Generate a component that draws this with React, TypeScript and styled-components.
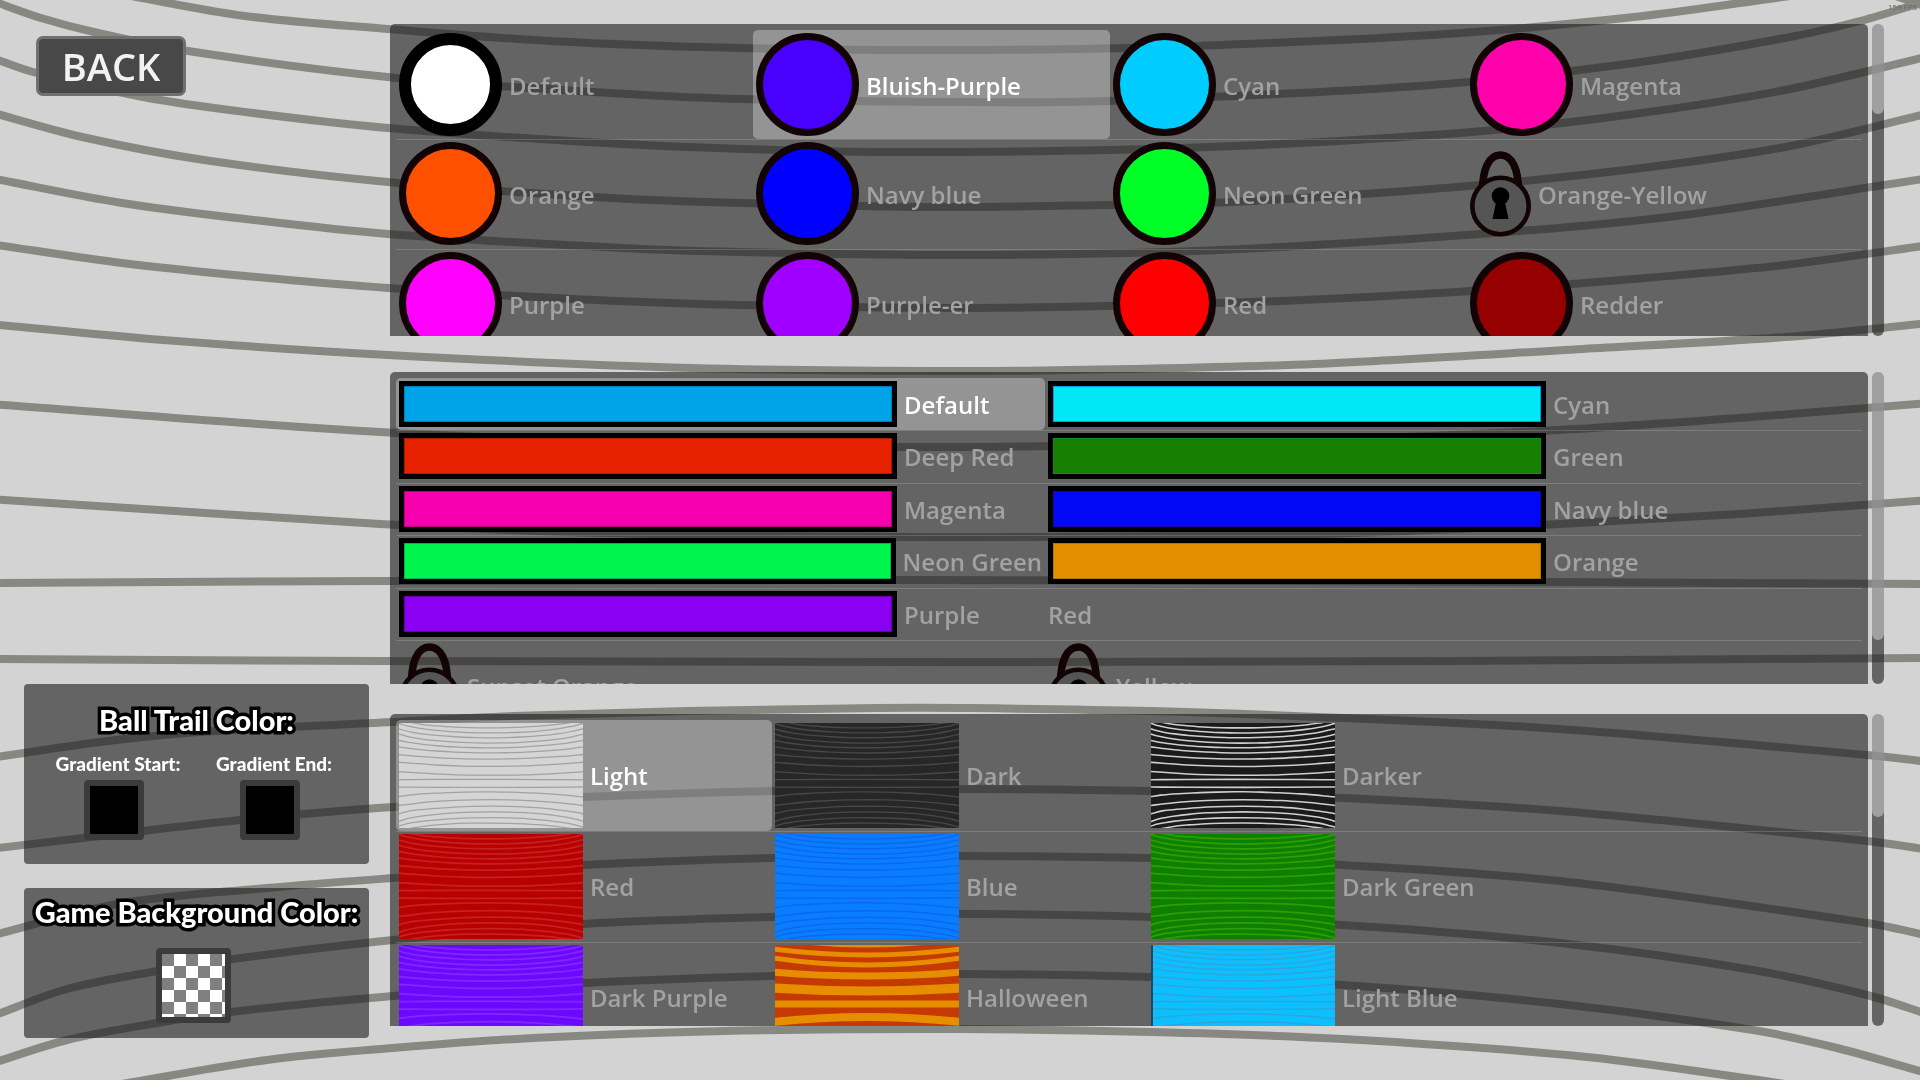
import React from "react";
import styled, { createGlobalStyle } from "styled-components";

const GlobalStyle = createGlobalStyle`
  * { box-sizing: border-box; }
  body {
    margin: 0;
    background: #d3d3d3;
    font-family: "Open Sans", "Noto Sans", sans-serif;
    overflow: hidden;
  }
`;

/* ---------- striped backdrop, also used inside the theme thumbnails ---------- */

type Point = [number, number];

const CURVES: Point[][] = [
  [[120, -6], [245, 16], [388, 29], [550, 41], [739, 48], [937, 50], [1126, 48], [1432, 35], [1634, 17], [1790, -4]],
  [[-10, 0], [41, 18], [94, 32], [188, 51], [388, 77], [593, 92], [739, 99], [937, 102], [1107, 101], [1432, 85], [1634, 63], [1785, 38], [1860, 21], [1930, 0]],
  [[-10, 57], [33, 72], [143, 97], [245, 112], [388, 128], [622, 144], [816, 151], [937, 152], [1107, 150], [1281, 144], [1483, 131], [1634, 114], [1785, 90], [1930, 56]],
  [[-10, 112], [82, 137], [204, 160], [388, 182], [593, 197], [739, 203], [937, 207], [1107, 205], [1231, 202], [1457, 187], [1634, 169], [1785, 147], [1930, 113]],
  [[-10, 178], [122, 203], [245, 219], [388, 234], [622, 248], [739, 252], [937, 255], [1130, 253], [1281, 247], [1533, 230], [1684, 215], [1930, 178]],
  [[-10, 244], [122, 263], [245, 276], [388, 288], [574, 299], [739, 305], [960, 308], [1107, 306], [1281, 301], [1457, 292], [1634, 279], [1785, 265], [1930, 245]],
  [[-10, 324], [163, 340], [388, 355], [692, 368], [960, 371], [1130, 369], [1314, 364], [1583, 349], [1785, 337], [1930, 323]],
  [[-10, 404], [380, 432], [660, 443], [960, 447], [1314, 440], [1541, 431], [1739, 418], [1930, 403]],
  [[-10, 499], [380, 524], [603, 533], [898, 537], [1030, 537], [1314, 534], [1541, 525], [1739, 514], [1930, 500]],
  [[-10, 583], [380, 581], [898, 580], [1552, 582], [1930, 584]],
  [[-10, 659], [380, 661], [960, 662], [1450, 661], [1930, 658]],
  [[-10, 758], [100, 742], [200, 732], [393, 722], [514, 716], [686, 711], [877, 708], [960, 708], [1151, 711], [1343, 718], [1560, 729], [1867, 755], [1930, 762]],
  [[-10, 849], [100, 836], [240, 820], [393, 807], [583, 797], [770, 791], [960, 789], [1151, 791], [1343, 798], [1560, 811], [1867, 841], [1930, 850]],
  [[-10, 936], [117, 904], [267, 888], [393, 878], [583, 865], [770, 858], [960, 856], [1151, 858], [1343, 865], [1560, 881], [1867, 923], [1930, 936]],
  [[-10, 1017], [67, 989], [157, 971], [233, 959], [393, 940], [583, 924], [770, 917], [960, 914], [1151, 917], [1343, 925], [1560, 943], [1753, 970], [1867, 995], [1930, 1015]],
  [[-10, 1064], [67, 1040], [157, 1023], [230, 1012], [393, 996], [583, 983], [770, 976], [960, 974], [1151, 977], [1343, 985], [1560, 1004], [1753, 1030], [1837, 1048], [1930, 1074]],
  [[110, 1086], [267, 1060], [393, 1048], [533, 1038], [724, 1031], [960, 1029], [1151, 1032], [1343, 1039], [1587, 1057], [1800, 1086]],
];

/* Smooth spline through the given points, written as cubic segments. */
const toPath = (pts: Point[]) =>
  pts.reduce((d, p, i) => {
    if (i === 0) return `M${p[0]} ${p[1]}`;
    const a = pts[i - 1];
    const before = pts[i - 2] ?? a;
    const after = pts[i + 1] ?? p;
    const h = (p[0] - a[0]) / 3;
    const s1 = (p[1] - before[1]) / (p[0] - before[0]);
    const s2 = (after[1] - a[1]) / (after[0] - a[0]);
    return `${d}C${a[0] + h} ${a[1] + s1 * h} ${p[0] - h} ${p[1] - s2 * h} ${p[0]} ${p[1]}`;
  }, "");

const CURVE_PATH = CURVES.map(toPath).join("") + "M1890 -6L1930 8";

const Backdrop = styled.svg`
  position: fixed;
  inset: 0;
  z-index: -1;
  width: 100%;
  height: 100%;
`;

const Stripes = ({ color, width }: { color: string; width: number }) => (
  <path d={CURVE_PATH} fill="none" stroke={color} strokeWidth={width} />
);

/* ---------- page frame ---------- */

const Page = styled.div`
  display: grid;
  grid-template-columns: 345px minmax(0, 1fr);
  grid-template-rows: minmax(0, 1fr);
  column-gap: 21px;
  height: 100vh;
  padding: 24px 36px 42px 24px;
`;

const Side = styled.aside`
  display: flex;
  flex-direction: column;
  gap: 24px;
`;

const BackButton = styled.button`
  align-self: flex-start;
  width: 150px;
  height: 60px;
  margin: 12px 12px auto;
  padding: 0;
  border: 3px solid #6f6f6f;
  border-radius: 7px;
  background: #484848;
  color: #f2f2f2;
  font: 600 38px/52px "Open Sans", "Noto Sans", sans-serif;
`;

const Fps = styled.output`
  position: fixed;
  top: 1px;
  left: calc(100% - 32px);
  color: #66665f;
  font-size: 8px;
  line-height: 11px;
  white-space: nowrap;
`;

const Card = styled.section<{ $height: number; $top: number }>`
  display: flex;
  flex-direction: column;
  align-items: center;
  min-height: ${(p) => p.$height}px;
  padding-top: ${(p) => p.$top}px;
  border-radius: 4px;
  background: rgba(26, 26, 26, 0.6);
  font-family: Lato, "Open Sans", sans-serif;
`;

const CardTitle = styled.h2`
  margin: 0;
  color: #fff;
  font-size: 29px;
  font-weight: 900;
  line-height: 36px;
  white-space: nowrap;
  -webkit-text-stroke: 7px #000;
  paint-order: stroke fill;
  stroke-linejoin: round;
`;

const Pickers = styled.div`
  display: flex;
  gap: 20px;
  margin: 14px 9px 0 0;
`;

const Picker = styled.div`
  display: flex;
  flex-direction: column;
  align-items: center;
  gap: 4px;
  width: 136px;
  color: #fff;
  font-size: 19px;
  font-weight: 900;
  line-height: 24px;
  white-space: nowrap;
`;

const PickerLabel = styled.label`
  padding-left: 8px;
`;

const Swatch = styled.button<{ $size: number; $checker?: boolean }>`
  width: ${(p) => p.$size}px;
  height: ${(p) => p.$size}px;
  padding: 0;
  border: 6px solid #3b3b3b;
  border-radius: 4px;
  background: ${(p) =>
    p.$checker
      ? "repeating-conic-gradient(#fff 0 25%, #808080 0 50%) 0 0 / 24px 24px padding-box"
      : "#000"};
`;

const CheckerSlot = styled.div`
  margin: 18px 6px 0 0;
`;

/* ---------- item lists ---------- */

const Lists = styled.main`
  display: grid;
  grid-template-rows: minmax(0, 1fr) 36px minmax(0, 1fr) 30px minmax(0, 1fr);
  padding-bottom: 12px;
`;

const ListFrame = styled.section<{ $slot: number }>`
  grid-row: ${(p) => p.$slot};
  display: flex;
  gap: 4px;
  min-height: 0;
`;

const ListBody = styled.div`
  flex: 1;
  min-width: 0;
  padding: 6px 6px 0;
  border-radius: 5px 5px 0 0;
  background: rgba(26, 26, 26, 0.6);
  overflow: hidden;
`;

const Row = styled.div<{ $columns: number; $cell: number; $stagger?: boolean }>`
  display: grid;
  grid-template-columns: repeat(${(p) => p.$columns}, ${(p) => p.$cell}px);
  & + & { box-shadow: inset 0 1px rgba(255, 255, 255, 0.16); }
  &:nth-child(even) { padding-bottom: ${(p) => (p.$stagger ? 1 : 0)}px; }
`;

const Item = styled.button<{ $on?: boolean }>`
  display: flex;
  align-items: center;
  gap: 7px;
  padding: 3px;
  border: 0;
  border-radius: 5px;
  background: ${(p) => (p.$on ? "rgba(255, 255, 255, 0.3)" : "transparent")};
  color: ${(p) => (p.$on ? "#fff" : "#a2a2a2")};
  font: 600 24px/33px "Open Sans", "Noto Sans", sans-serif;
  text-align: left;
  white-space: nowrap;
`;

const ItemName = styled.span<{ $drop: number }>`
  padding-top: ${(p) => p.$drop}px;
`;

const Track = styled.div`
  width: 12px;
  border-radius: 6px;
  background: rgba(26, 26, 26, 0.6);
`;

const Thumb = styled.div<{ $share: number }>`
  height: ${(p) => p.$share}%;
  border-radius: 6px;
  background: rgba(255, 255, 255, 0.39);
`;

const Ball = styled.span<{ $fill: string; $thick?: boolean }>`
  width: 103px;
  height: 103px;
  border: ${(p) => (p.$thick ? "12px solid #000" : "7px solid #120404")};
  border-radius: 50%;
  background: ${(p) => p.$fill};
`;

const Bar = styled.span<{ $fill: string; $rim: string }>`
  width: 498px;
  height: 46px;
  border: 5px solid #000;
  background: ${(p) => p.$fill};
  box-shadow: inset 0 0 0 1px ${(p) => p.$rim};
`;

const LockSvg = styled.svg`
  width: 61px;
  height: 86px;
`;

const Scene = styled.svg<{ $base: string; $edge?: boolean }>`
  width: 184px;
  height: 105px;
  background: ${(p) => p.$base};
  border-left: ${(p) => (p.$edge ? "2px solid #174a66" : "0")};
`;

const Lock = () => (
  <LockSvg viewBox="0 0 61 86" aria-label="Locked">
    <path d="M12.5 40C12.5 18 19 4 30.5 4S48.5 18 48.5 40" fill="none" stroke="#120404" strokeWidth="7.5" />
    <circle cx="30.5" cy="55" r="28.2" fill="#555" stroke="#120404" strokeWidth="4.6" />
    <circle cx="30.5" cy="45" r="8.8" fill="#000" />
    <path d="M26.5 49h8l4 19h-16z" fill="#000" />
  </LockSvg>
);

/* Wide orange bands: [edge y, middle y, thickness] */
const BANDS = [
  [-6, 1, 3],
  [4, 10, 5],
  [13, 20, 5],
  [27, 31, 7],
  [43, 46, 9],
  [59, 59, 7],
  [77, 72, 8],
  [92, 85, 6],
];

const HalloweenScene = () => (
  <Scene $base="#c43a02" viewBox="0 0 184 105">
    {BANDS.map(([edge, mid, w]) => (
      <path key={edge} d={`M-2 ${edge}Q92 ${2 * mid - edge} 186 ${edge}`} fill="none" stroke="#e68e00" strokeWidth={w} />
    ))}
  </Scene>
);

interface Entry { name: string; icon?: React.ReactNode; }

const ball = (name: string, fill: string, thick = false): Entry => ({ name, icon: <Ball $fill={fill} $thick={thick} /> });
const bar = (name: string, fill: string, rim: string): Entry => ({ name, icon: <Bar $fill={fill} $rim={rim} /> });
const locked = (name: string): Entry => ({ name, icon: <Lock /> });
const scene = (name: string, base: string, line: string, width: number, edge = false): Entry => ({
  name,
  icon: (
    <Scene $base={base} $edge={edge} viewBox="0 0 1920 1080" preserveAspectRatio="none">
      <Stripes color={line} width={width} />
    </Scene>
  ),
});

const BALLS: Entry[][] = [
  [ball("Default", "#fff", true), ball("Bluish-Purple", "#4800ff"), ball("Cyan", "#00ccff"), ball("Magenta", "#ff00aa")],
  [ball("Orange", "#ff5000"), ball("Navy blue", "#0000ff"), ball("Neon Green", "#00ff26"), locked("Orange-Yellow")],
  [ball("Purple", "#ff00ff"), ball("Purple-er", "#a000ff"), ball("Red", "#ff0000"), ball("Redder", "#960000")],
];

const PADDLES: Entry[][] = [
  [bar("Default", "#00a2e8", "#007cb4"), bar("Cyan", "#00e8f5", "#0098e8")],
  [bar("Deep Red", "#e62200", "#a81c00"), bar("Green", "#188000", "#0c9020")],
  [bar("Magenta", "#f500ac", "#b8007c"), bar("Navy blue", "#0008f5", "#1c04a8")],
  [bar("Neon Green", "#00f54c", "#00b45c"), bar("Orange", "#e29000", "#b47800")],
  [bar("Purple", "#8a00f2", "#6800a8"), { name: "Red" }],
  [locked("Sunset Orange"), locked("Yellow")],
];

const THEMES: Entry[][] = [
  [scene("Light", "#d5d5d5", "#a2a29e", 13), scene("Dark", "#272727", "#484848", 14), scene("Darker", "#1b1b1b", "#cfcfcf", 16)],
  [scene("Red", "#b80000", "#c62020", 18), scene("Blue", "#0a7dff", "#0a68ee", 15), scene("Dark Green", "#0d8000", "#2e9e00", 18)],
  [scene("Dark Purple", "#6c08ff", "#8029ff", 18), { name: "Halloween", icon: <HalloweenScene /> }, scene("Light Blue", "#0cc0ff", "#2aa6dc", 16, true)],
];

interface ListProps {
  label: string;
  slot: number;
  rows: Entry[][];
  cell: number;
  share: number;
  selected: string;
  stagger?: boolean;
  drop?: number;
}

const ItemList = ({ label, slot, rows, cell, share, selected, stagger, drop = 0 }: ListProps) => {
  const [current, setCurrent] = React.useState(selected);
  return (
    <ListFrame $slot={slot} aria-label={label}>
      <ListBody>
        {rows.map((row, i) => (
          <Row key={i} $columns={row.length} $cell={cell} $stagger={stagger}>
            {row.map((entry) => (
              <Item
                key={entry.name}
                type="button"
                $on={entry.name === current}
                aria-pressed={entry.name === current}
                onClick={() => setCurrent(entry.name)}
              >
                {entry.icon}
                <ItemName $drop={drop}>{entry.name}</ItemName>
              </Item>
            ))}
          </Row>
        ))}
      </ListBody>
      <Track>
        <Thumb $share={share} />
      </Track>
    </ListFrame>
  );
};

export default function App() {
  return (
    <>
      <GlobalStyle />
      <Backdrop viewBox="0 0 1920 1080" preserveAspectRatio="none" aria-hidden="true">
        <Stripes color="#888883" width={8} />
      </Backdrop>
      <Fps>159 FPS</Fps>
      <Page>
        <Side>
          <BackButton type="button">BACK</BackButton>
          <Card $height={180} $top={18}>
            <CardTitle>Ball Trail Color:</CardTitle>
            <Pickers>
              <Picker>
                <PickerLabel htmlFor="gradient-start">Gradient Start:</PickerLabel>
                <Swatch id="gradient-start" type="button" $size={60} />
              </Picker>
              <Picker>
                <PickerLabel htmlFor="gradient-end">Gradient End:</PickerLabel>
                <Swatch id="gradient-end" type="button" $size={60} />
              </Picker>
            </Pickers>
          </Card>
          <Card $height={150} $top={6}>
            <CardTitle>Game Background Color:</CardTitle>
            <CheckerSlot>
              <Swatch type="button" aria-label="Game background color" $size={75} $checker />
            </CheckerSlot>
          </Card>
        </Side>
        <Lists>
          <ItemList label="Ball" slot={1} rows={BALLS} cell={357} share={29} selected="Bluish-Purple" stagger drop={2} />
          <ItemList label="Paddle" slot={3} rows={PADDLES} cell={649} share={86} selected="Default" stagger />
          <ItemList label="Theme" slot={5} rows={THEMES} cell={376} share={33} selected="Light" />
        </Lists>
      </Page>
    </>
  );
}
